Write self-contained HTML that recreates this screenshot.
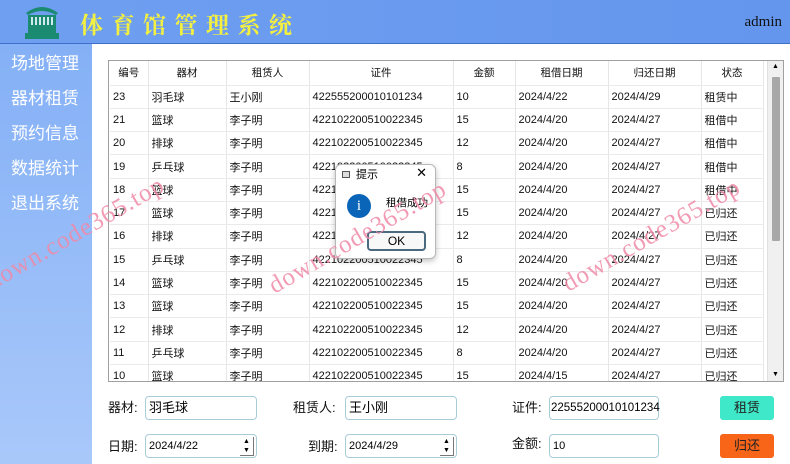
<!DOCTYPE html>
<html><head><meta charset="utf-8"><style>
*{margin:0;padding:0;box-sizing:border-box}
body{width:790px;height:464px;position:relative;overflow:hidden;background:#fff;font-family:"Liberation Sans","Noto Sans CJK SC",sans-serif}
.hdr{position:absolute;left:0;top:0;width:790px;height:44px;background:linear-gradient(90deg,#6f9ff0,#6496ee);border-bottom:1px solid #3f6fc8}
.title{position:absolute;left:80px;top:7px;font-family:"Noto Serif CJK SC",serif;font-weight:bold;font-size:23px;color:#f4f040;letter-spacing:8.5px}
.admin{position:absolute;right:8px;top:14px;font-family:"Liberation Serif",serif;font-size:15px;color:#111}
.side{position:absolute;left:0;top:44px;width:92px;height:420px;background:linear-gradient(180deg,#84b0f6,#a9c8fa)}
.side div{height:35px;font-size:17px;color:#fff;padding-left:11px;line-height:40px}
.tbl{position:absolute;left:108px;top:60px;width:676px;height:322px;border:1px solid #a0a0a0;overflow:hidden}
table{border-collapse:collapse;font-size:11px;color:#111;position:absolute;left:1px;top:0}
td{height:23.3px;border-right:1px solid #e6e6e6;border-bottom:1px solid #eaeaea;padding-left:3px;white-space:nowrap}
tr.h td{text-align:center;padding:0;height:24px;font-size:10.5px}
.sb{position:absolute;right:0;top:0;width:16px;height:320px;background:#f0f0f0;border-left:1px solid #e0e0e0}
.thumb{position:absolute;left:4px;top:16px;width:8px;height:164px;background:#a8a8a8;border-radius:1px}
.lbl{position:absolute;font-size:13px;color:#111}
.inp{position:absolute;height:24px;border:1px solid #a8ccd8;border-radius:4px;background:#fff;font-size:13px;padding-left:3px;line-height:22px}
.date{font-family:"Liberation Sans Narrow","Liberation Sans",sans-serif;font-size:11px}
.spin{position:absolute;right:2px;top:2px;width:14px;height:19px;border:1px solid #777;border-width:0 1px 1px 0;font-size:7px;line-height:9px;text-align:center}
.btn{position:absolute;width:54px;height:24px;border-radius:3px;font-size:13px;text-align:center;line-height:24px;color:#222}
.dlg{position:absolute;left:335px;top:164px;width:101px;height:95px;background:#fff;border:1px solid #b8b8b8;border-radius:6px;box-shadow:0 2px 6px rgba(0,0,0,.25)}
.wm{position:absolute;color:#f08aa8;font-family:"Liberation Serif",serif;font-size:25px;opacity:.85;transform:rotate(-30deg);transform-origin:left bottom;white-space:nowrap;letter-spacing:1px}
</style></head><body>
<div class="hdr">
<svg style="position:absolute;left:22px;top:3px" width="40" height="38" viewBox="0 0 40 38">
<path d="M4 10 Q20 -2 36 10 L34 12 Q20 4 6 12Z" fill="#1a8a70"/>
<rect x="6" y="12" width="28" height="18" fill="#1a8a70"/>
<g fill="#d0e8f0"><rect x="9" y="14" width="2" height="8"/><rect x="13" y="14" width="2" height="8"/><rect x="17" y="14" width="2" height="8"/><rect x="21" y="14" width="2" height="8"/><rect x="25" y="14" width="2" height="8"/><rect x="29" y="14" width="2" height="8"/></g>
<rect x="3" y="30" width="34" height="6" fill="#1a8a70"/>
</svg>
<div class="title">体育馆管理系统</div>
<div class="admin">admin</div>
</div>
<div class="side"><div>场地管理</div><div>器材租赁</div><div>预约信息</div><div>数据统计</div><div>退出系统</div></div>
<div class="tbl">
<table>
<colgroup><col style="width:38px"><col style="width:78px"><col style="width:83px"><col style="width:144px"><col style="width:62px"><col style="width:93px"><col style="width:93px"><col style="width:62px"></colgroup>
<tr class="h"><td>编号</td><td>器材</td><td>租赁人</td><td>证件</td><td>金额</td><td>租借日期</td><td>归还日期</td><td>状态</td></tr>
<tr><td>23</td><td>羽毛球</td><td>王小刚</td><td>422555200010101234</td><td>10</td><td>2024/4/22</td><td>2024/4/29</td><td>租赁中</td></tr>
<tr><td>21</td><td>篮球</td><td>李子明</td><td>422102200510022345</td><td>15</td><td>2024/4/20</td><td>2024/4/27</td><td>租借中</td></tr>
<tr><td>20</td><td>排球</td><td>李子明</td><td>422102200510022345</td><td>12</td><td>2024/4/20</td><td>2024/4/27</td><td>租借中</td></tr>
<tr><td>19</td><td>乒乓球</td><td>李子明</td><td>422102200510022345</td><td>8</td><td>2024/4/20</td><td>2024/4/27</td><td>租借中</td></tr>
<tr><td>18</td><td>篮球</td><td>李子明</td><td>422102200510022345</td><td>15</td><td>2024/4/20</td><td>2024/4/27</td><td>租借中</td></tr>
<tr><td>17</td><td>篮球</td><td>李子明</td><td>422102200510022345</td><td>15</td><td>2024/4/20</td><td>2024/4/27</td><td>已归还</td></tr>
<tr><td>16</td><td>排球</td><td>李子明</td><td>422102200510022345</td><td>12</td><td>2024/4/20</td><td>2024/4/27</td><td>已归还</td></tr>
<tr><td>15</td><td>乒乓球</td><td>李子明</td><td>422102200510022345</td><td>8</td><td>2024/4/20</td><td>2024/4/27</td><td>已归还</td></tr>
<tr><td>14</td><td>篮球</td><td>李子明</td><td>422102200510022345</td><td>15</td><td>2024/4/20</td><td>2024/4/27</td><td>已归还</td></tr>
<tr><td>13</td><td>篮球</td><td>李子明</td><td>422102200510022345</td><td>15</td><td>2024/4/20</td><td>2024/4/27</td><td>已归还</td></tr>
<tr><td>12</td><td>排球</td><td>李子明</td><td>422102200510022345</td><td>12</td><td>2024/4/20</td><td>2024/4/27</td><td>已归还</td></tr>
<tr><td>11</td><td>乒乓球</td><td>李子明</td><td>422102200510022345</td><td>8</td><td>2024/4/20</td><td>2024/4/27</td><td>已归还</td></tr>
<tr><td>10</td><td>篮球</td><td>李子明</td><td>422102200510022345</td><td>15</td><td>2024/4/15</td><td>2024/4/27</td><td>已归还</td></tr>
</table>
<div class="sb"><div style="font-size:7px;text-align:center;line-height:12px">▲</div><div class="thumb"></div><div style="position:absolute;bottom:0;width:15px;font-size:7px;text-align:center;line-height:12px">▼</div></div>
</div>

<div class="lbl" style="left:108px;top:397px">器材:</div>
<div class="inp" style="left:145px;top:396px;width:112px">羽毛球</div>
<div class="lbl" style="left:293px;top:397px">租赁人:</div>
<div class="inp" style="left:345px;top:396px;width:112px">王小刚</div>
<div class="lbl" style="left:512px;top:397px">证件:</div>
<div class="inp date" style="left:549px;top:396px;width:110px;font-size:11.5px;padding-left:1px">22555200010101234</div>
<div class="btn" style="left:720px;top:396px;background:#3ee8c8">租赁</div>

<div class="lbl" style="left:108px;top:436px">日期:</div>
<div class="inp date" style="left:145px;top:434px;width:112px">2024/4/22<div class="spin">▲<br>▼</div></div>
<div class="lbl" style="left:308px;top:436px">到期:</div>
<div class="inp date" style="left:345px;top:434px;width:112px">2024/4/29<div class="spin">▲<br>▼</div></div>
<div class="lbl" style="left:512px;top:433px">金额:</div>
<div class="inp" style="left:549px;top:434px;width:110px;font-size:11px">10</div>
<div class="btn" style="left:720px;top:434px;background:#f86418">归还</div>

<div class="dlg">
<div style="position:absolute;left:6px;top:6px;width:8px;height:7px;border:1px solid #555;background:#ddd"></div>
<div style="position:absolute;left:20px;top:1px;font-size:11px">提示</div>
<div style="position:absolute;right:8px;top:0;font-size:13px">✕</div>
<div style="position:absolute;left:11px;top:29px;width:24px;height:24px;border-radius:50%;background:#0a64b8;color:#fff;text-align:center;font-size:15px;line-height:24px;font-family:'Liberation Serif',serif">i</div>
<div style="position:absolute;left:50px;top:30px;font-size:10.5px">租借成功</div>
<div style="position:absolute;left:31px;top:66px;width:59px;height:20px;border:2px solid #4a6a80;border-radius:4px;text-align:center;font-size:12px;line-height:16px;background:#f8f8f8">OK</div>
</div>

<div class="wm" style="left:-4px;top:268px">down.code365.top</div>
<div class="wm" style="left:278px;top:272px">down.code365.top</div>
<div class="wm" style="left:572px;top:270px">down.code365.top</div>
</body></html>
